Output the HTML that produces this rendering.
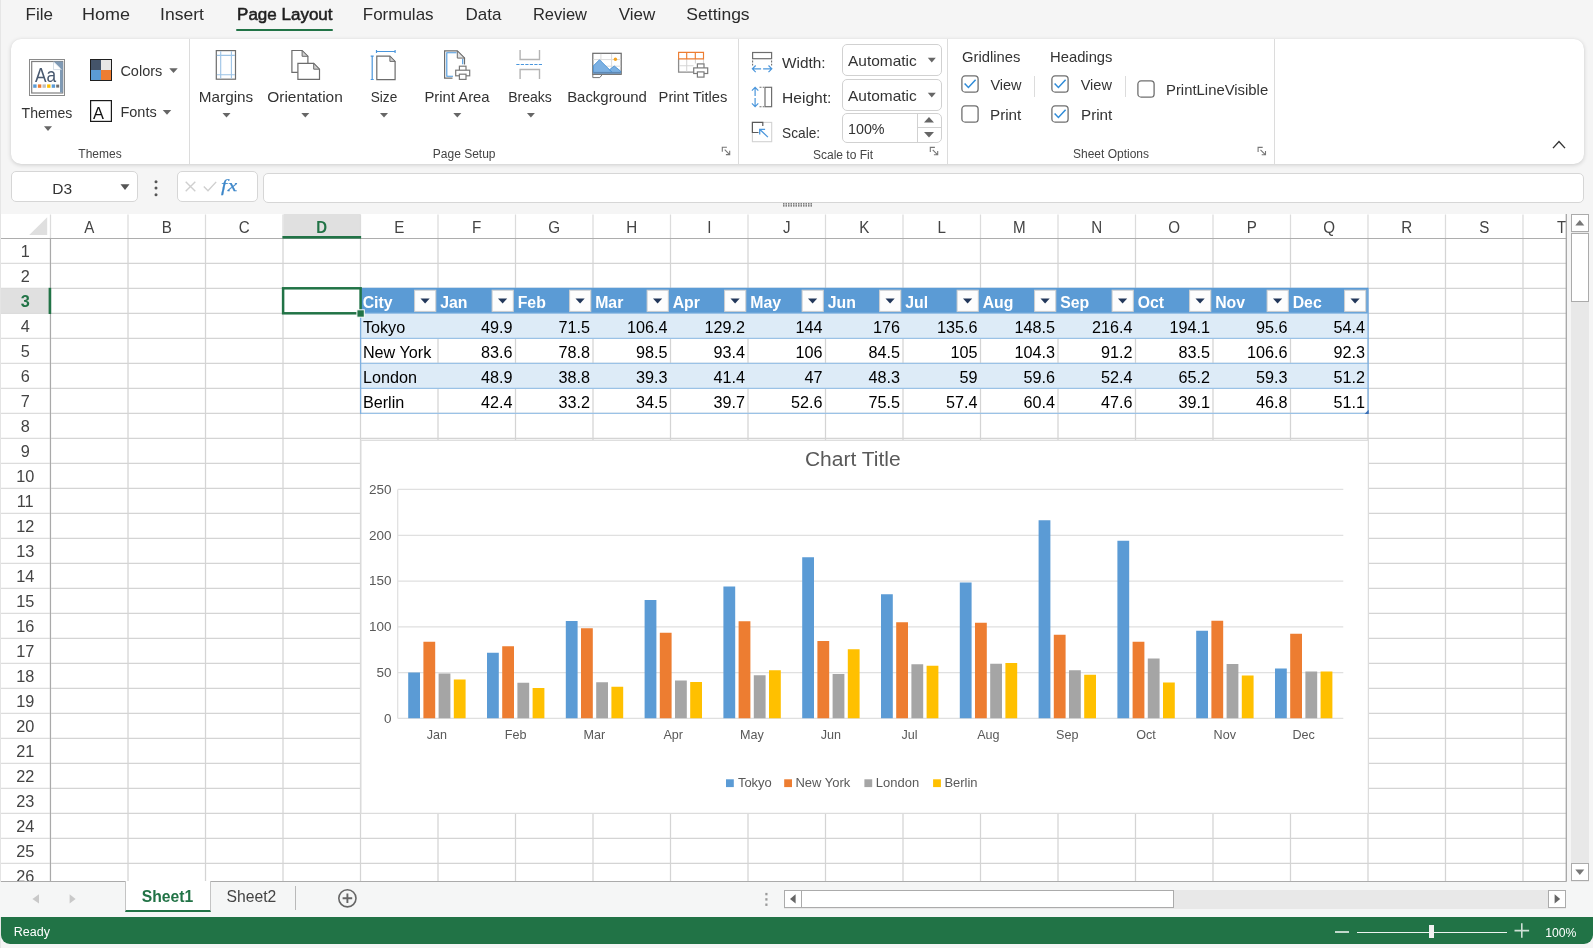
<!DOCTYPE html>
<html lang="en"><head><meta charset="utf-8"><title>Spreadsheet Designer</title>
<style>
html,body{margin:0;padding:0}
body{width:1593px;height:948px;overflow:hidden;background:#f5f5f5;font-family:"Liberation Sans", sans-serif;position:relative}
.t{position:absolute;white-space:nowrap;margin:0;padding:0}
.r{position:absolute;box-sizing:border-box;display:block}
svg text{font-family:"Liberation Sans", sans-serif}
#app{position:absolute;left:0;top:0;width:1593px;height:948px;will-change:transform}
</style></head><body>
<div id="app">
<div class="r" style="left:0px;top:0px;width:1px;height:948px;background:#e6e6e6;"></div><div id="menubar"><div class="t" style="left:-260.80px;width:600px;text-align:center;top:6px;font-size:17px;line-height:17px;color:#2b2b2b;">File</div><div class="t" style="left:-193.80px;width:600px;text-align:center;top:6px;font-size:17px;line-height:17px;color:#2b2b2b;transform:scaleX(1.06);transform-origin:50% 0;">Home</div><div class="t" style="left:-118.00px;width:600px;text-align:center;top:6px;font-size:17px;line-height:17px;color:#2b2b2b;transform:scaleX(1.03);transform-origin:50% 0;">Insert</div><div class="t" style="left:-15.20px;width:600px;text-align:center;top:6px;font-size:17px;line-height:17px;color:#1f1f1f;-webkit-text-stroke:0.55px #1f1f1f;">Page Layout</div><div class="t" style="left:98.20px;width:600px;text-align:center;top:6px;font-size:17px;line-height:17px;color:#2b2b2b;">Formulas</div><div class="t" style="left:183.40px;width:600px;text-align:center;top:6px;font-size:17px;line-height:17px;color:#2b2b2b;">Data</div><div class="t" style="left:259.70px;width:600px;text-align:center;top:6px;font-size:17px;line-height:17px;color:#2b2b2b;transform:scaleX(0.97);transform-origin:50% 0;">Review</div><div class="t" style="left:337.00px;width:600px;text-align:center;top:6px;font-size:17px;line-height:17px;color:#2b2b2b;">View</div><div class="t" style="left:418.00px;width:600px;text-align:center;top:6px;font-size:17px;line-height:17px;color:#2b2b2b;transform:scaleX(1.03);transform-origin:50% 0;">Settings</div><div class="r" style="left:236px;top:28.5px;width:97px;height:2.5px;background:#217346;border-radius:1px;"></div></div><div id="ribbon" class="r" style="left:11px;top:39px;width:1573px;height:124.5px;background:#fff;border-radius:10px;box-shadow:0 1px 4px rgba(0,0,0,.17),0 0 1px rgba(0,0,0,.08)"></div><div class="r" style="left:189px;top:39px;width:1px;height:124.5px;background:#dcdcdc;"></div><div class="r" style="left:738px;top:39px;width:1px;height:124.5px;background:#dcdcdc;"></div><div class="r" style="left:947px;top:39px;width:1px;height:124.5px;background:#dcdcdc;"></div><div class="r" style="left:1274px;top:39px;width:1px;height:124.5px;background:#dcdcdc;"></div><svg class="r" style="left:29px;top:59px" width="36" height="37" viewBox="0 0 36 37" fill="none"><rect x=".5" y=".5" width="35" height="36" fill="#fff" stroke="#8a8a8a"/><rect x="2.7" y="2.5" width="31" height="31.5" fill="#fff" stroke="#7f7f7f" stroke-width="1.2"/><rect x="31" y="3" width="2.8" height="30.5" fill="#7f9ab5"/><polygon points="24.5,2.6 33.6,2.6 33.6,11" fill="#7f9ab5"/><polygon points="24.5,2.8 24.5,10.6 32.6,10.6" fill="#fff" stroke="#b8c6d4" stroke-width=".6"/><text x="5.9" y="22.6" font-size="19.5" fill="#4a5a70" textLength="21.2" lengthAdjust="spacingAndGlyphs">Aa</text><rect x="4.2" y="25.4" width="3.4" height="3.4" fill="#5b9bd5"/><rect x="8.9" y="25.4" width="3.4" height="3.4" fill="#ed7d31"/><rect x="13.5" y="25.4" width="3.4" height="3.4" fill="#bfbfbf"/><rect x="18.1" y="25.4" width="3.4" height="3.4" fill="#ffc000"/><rect x="22.7" y="25.4" width="3.4" height="3.4" fill="#5b9bd5"/><rect x="27.2" y="25.6" width="3" height="3" fill="#6d6d6d"/></svg><div class="t" style="left:-252.70px;width:600px;text-align:center;top:106px;font-size:14.5px;line-height:14.5px;color:#333;transform:scaleX(0.97);transform-origin:50% 0;">Themes</div><svg class="r" style="left:44px;top:126px" width="8" height="5" viewBox="0 0 8 5"><polygon points="0.0,0.3 8.0,0.3 4.0,4.8999999999999995" fill="#666"/></svg><svg class="r" style="left:90px;top:59px" width="22" height="22" viewBox="0 0 22 22" fill="none"><rect x="0" y="0" width="22" height="22" fill="#1f1f1f"/><rect x="1" y="1" width="10" height="10" fill="#44546a"/><rect x="11" y="1" width="10" height="10" fill="#e7e6e6"/><rect x="1" y="11" width="10" height="10" fill="#5b9bd5"/><rect x="11" y="11" width="10" height="10" fill="#ed7d31"/></svg><div class="t" style="left:120.40px;top:64px;font-size:14.5px;line-height:14.5px;color:#333;">Colors</div><svg class="r" style="left:169px;top:68px" width="9" height="6" viewBox="0 0 9 6"><polygon points="0.25,0.3 8.75,0.3 4.5,5.1" fill="#666"/></svg><svg class="r" style="left:90px;top:100px" width="22" height="22" viewBox="0 0 22 22" fill="none"><rect x=".6" y=".6" width="20.8" height="20.8" fill="#fff" stroke="#1a1a1a" stroke-width="1.2"/><text x="8.5" y="18.8" font-size="16.4" fill="#111" text-anchor="middle">A</text></svg><div class="t" style="left:120.40px;top:105px;font-size:14.5px;line-height:14.5px;color:#333;">Fonts</div><svg class="r" style="left:162px;top:110px" width="10" height="5" viewBox="0 0 10 5"><polygon points="0.75,0 9.25,0 5.0,4.8" fill="#666"/></svg><div class="t" style="left:-200.00px;width:600px;text-align:center;top:148px;font-size:12px;line-height:12px;color:#444;">Themes</div><svg class="r" style="left:215px;top:49px" width="23" height="32" viewBox="0 0 23 32" fill="none"><g transform="translate(0.2 0.6)"><rect x="1.1" y="1" width="19.2" height="28.6" fill="#fff" stroke="#6c6c6c" stroke-width="1.2"/><path d="M5.5 1.6V29M16.2 1.6V29M1.7 5.8H19.7M1.7 25.2H19.7" stroke="#9cc3e6" stroke-width="1.1"/></g></svg><div class="t" style="left:-74.00px;width:600px;text-align:center;top:90px;font-size:14.5px;line-height:14.5px;color:#333;transform:scaleX(1.054);transform-origin:50% 0;">Margins</div><svg class="r" style="left:222px;top:113px" width="9" height="5" viewBox="0 0 9 5"><polygon points="0.5,0 8.5,0 4.5,4.6" fill="#666"/></svg><svg class="r" style="left:290px;top:49px" width="31" height="32" viewBox="0 0 31 32" fill="none"><g transform="translate(0.5 0.4)"><path d="M7.4 23H1.4V1.1H11.6L17.4 6.9V13.5" stroke="#6c6c6c" stroke-width="1.2"/><path d="M11.6 1.1V6.9H17.4Z" fill="#d0d0d0" stroke="#6c6c6c" stroke-width="1"/><path d="M7.4 30V14H23.2L29 19.8V30Z" fill="#fff" stroke="#6c6c6c" stroke-width="1.2"/><path d="M23.2 14V19.8H29Z" fill="#d0d0d0" stroke="#6c6c6c" stroke-width="1"/></g></svg><div class="t" style="left:4.80px;width:600px;text-align:center;top:90px;font-size:14.5px;line-height:14.5px;color:#333;transform:scaleX(1.064);transform-origin:50% 0;">Orientation</div><svg class="r" style="left:301px;top:113px" width="9" height="5" viewBox="0 0 9 5"><polygon points="0.3,0 8.3,0 4.3,4.6" fill="#666"/></svg><svg class="r" style="left:370px;top:49px" width="27" height="32" viewBox="0 0 27 32" fill="none"><g transform="translate(0.5 0.5)"><path d="M6 2H24.6M6 .4V3.6M24.6 .4V3.6M1.7 6.6V30M.2 6.6H3.2M.2 30H3.2" stroke="#4a96dc" stroke-width="1.2"/><path d="M6.3 30.1V6.7H19.4L24.6 11.9V30.1Z" fill="#fff" stroke="#6c6c6c" stroke-width="1.2"/><path d="M19.4 6.7V11.9H24.6Z" fill="#d0d0d0" stroke="#6c6c6c" stroke-width="1"/></g></svg><div class="t" style="left:83.50px;width:600px;text-align:center;top:90px;font-size:14.5px;line-height:14.5px;color:#333;transform:scaleX(0.94);transform-origin:50% 0;">Size</div><svg class="r" style="left:380px;top:113px" width="8" height="5" viewBox="0 0 8 5"><polygon points="0.0,0 8.0,0 4.0,4.6" fill="#666"/></svg><svg class="r" style="left:443px;top:49px" width="29" height="32" viewBox="0 0 29 32" fill="none"><g transform="translate(0.5 0.6)"><path d="M9 28.6H1.1V1.3H13.8L21 8.5V15" stroke="#6c6c6c" stroke-width="1.2"/><path d="M13.8 1.3V8.5H21Z" fill="#e4e4e4" stroke="#6c6c6c" stroke-width="1"/><path d="M13 3.1H3.3V26.6H9.5M19.2 9.5V14.6" stroke="#4a96dc" stroke-width="1.1"/><rect x="15.899999999999999" y="16.6" width="6.6" height="5" fill="#fff" stroke="#7a7a7a" stroke-width="1.2"/><rect x="12.2" y="20.6" width="14" height="5.6" fill="#fff" stroke="#7a7a7a" stroke-width="1.2"/><rect x="15.899999999999999" y="24.6" width="6.6" height="5.2" fill="#fff" stroke="#7a7a7a" stroke-width="1.2"/></g></svg><div class="t" style="left:156.80px;width:600px;text-align:center;top:90px;font-size:14.5px;line-height:14.5px;color:#333;transform:scaleX(1.024);transform-origin:50% 0;">Print Area</div><svg class="r" style="left:453px;top:113px" width="9" height="5" viewBox="0 0 9 5"><polygon points="0.3,0 8.3,0 4.3,4.6" fill="#666"/></svg><svg class="r" style="left:515px;top:49px" width="29" height="31" viewBox="0 0 29 31" fill="none"><g transform="translate(0.7 0.5)"><path d="M4.4 .5V10H23.8V.5M4.4 29.5V20H23.8V29.5" stroke="#b4b4b4" stroke-width="1.4"/><path d="M.6 15H27.4" stroke="#4a96dc" stroke-width="1.1" stroke-dasharray="3.2 1.3"/></g></svg><div class="t" style="left:230.40px;width:600px;text-align:center;top:90px;font-size:14.5px;line-height:14.5px;color:#333;transform:scaleX(0.968);transform-origin:50% 0;">Breaks</div><svg class="r" style="left:526px;top:113px" width="9" height="5" viewBox="0 0 9 5"><polygon points="0.9,0 8.9,0 4.9,4.6" fill="#666"/></svg><svg class="r" style="left:591px;top:52px" width="32" height="28" viewBox="0 0 32 28" fill="none"><g transform="translate(0.6 0.4)"><path d="M1.2 21.9V25.2H8.2L10.4 22.4" fill="#fff" stroke="#777" stroke-width="1"/><rect x="1.2" y=".9" width="28.4" height="21" fill="#fff" stroke="#6a6a6a" stroke-width="1.2"/><path d="M9.3 1.5V20.6M20 1.5V20.6M1.8 7.2H29M1.8 13.8H29" stroke="#dcdcdc" stroke-width="1"/><polygon points="1.8,13.4 7.9,7.3 20.8,20.2 1.8,20.2" fill="#7cb0e2" stroke="#3c8ad2" stroke-width=".8"/><polygon points="17.9,17.3 22.7,13.6 29,18.7 29,20.2 20.8,20.2" fill="#7cb0e2" stroke="#3c8ad2" stroke-width=".8"/><rect x="1.8" y="19.5" width="27.2" height="1.9" fill="#5e88b4"/><circle cx="23.8" cy="6.8" r="1.7" fill="#f5a21e"/></g></svg><div class="t" style="left:307.30px;width:600px;text-align:center;top:90px;font-size:14.5px;line-height:14.5px;color:#333;transform:scaleX(1.03);transform-origin:50% 0;">Background</div><svg class="r" style="left:677px;top:51px" width="32" height="28" viewBox="0 0 32 28" fill="none"><g transform="translate(0.5 0.5)"><path d="M1.1 7.4V20.7H16" stroke="#8c8c8c" stroke-width="1.3"/><path d="M9.2 7.4V20M17.9 7.4V12M1.5 14.2H16M26 7.4V12" stroke="#d6d6d6" stroke-width="1.1"/><path d="M1.1 .9H26V7.4H1.1ZM9.2 .9V7.4M17.8 .9V7.4" stroke="#ed7d31" stroke-width="1.15"/><rect x="19.9" y="12.4" width="6.6" height="5" fill="#fff" stroke="#7a7a7a" stroke-width="1.2"/><rect x="16.2" y="16.4" width="14" height="5.6" fill="#fff" stroke="#7a7a7a" stroke-width="1.2"/><rect x="19.9" y="20.4" width="6.6" height="5.2" fill="#fff" stroke="#7a7a7a" stroke-width="1.2"/></g></svg><div class="t" style="left:393.30px;width:600px;text-align:center;top:90px;font-size:14.5px;line-height:14.5px;color:#333;transform:scaleX(1.016);transform-origin:50% 0;">Print Titles</div><div class="t" style="left:164.20px;width:600px;text-align:center;top:148px;font-size:12px;line-height:12px;color:#444;">Page Setup</div><svg class="r" style="left:721px;top:146px" width="10" height="10" viewBox="0 0 10 10" fill="none"><g transform="translate(0.7 0.6)"><path d="M.6 5.2V.6H5.2" stroke="#777" stroke-width="1.1"/><path d="M3 3L8 8M8 4.2V8H4.2" stroke="#777" stroke-width="1.1"/></g></svg><svg class="r" style="left:929px;top:146px" width="10" height="10" viewBox="0 0 10 10" fill="none"><g transform="translate(0.7 0.8)"><path d="M.6 5.2V.6H5.2" stroke="#777" stroke-width="1.1"/><path d="M3 3L8 8M8 4.2V8H4.2" stroke="#777" stroke-width="1.1"/></g></svg><svg class="r" style="left:1257px;top:146px" width="10" height="10" viewBox="0 0 10 10" fill="none"><g transform="translate(0.5 0.8)"><path d="M.6 5.2V.6H5.2" stroke="#777" stroke-width="1.1"/><path d="M3 3L8 8M8 4.2V8H4.2" stroke="#777" stroke-width="1.1"/></g></svg><svg class="r" style="left:751px;top:51px" width="22" height="22" viewBox="0 0 22 22" fill="none"><g transform="translate(0.5 0.5)"><rect x="1.1" y="1" width="19" height="6.2" stroke="#6e6e6e" stroke-width="1.2"/><path d="M1.1 9V14M20.1 9V14" stroke="#6e6e6e" stroke-width="1.1" stroke-dasharray="2 1.2"/><path d="M.9 17.3H9.6M4.2 14L.9 17.3L4.2 20.6M11.6 17.3H20.3M17 14L20.3 17.3L17 20.6" stroke="#4a96dc" stroke-width="1.2"/></g></svg><div class="t" style="left:781.60px;top:56px;font-size:14.5px;line-height:14.5px;color:#333;transform:scaleX(1.06);transform-origin:0 0;">Width:</div><svg class="r" style="left:751px;top:86px" width="22" height="22" viewBox="0 0 22 22" fill="none"><g transform="translate(0.5 0.5)"><rect x="13.5" y=".8" width="6.6" height="19.4" stroke="#6e6e6e" stroke-width="1.2"/><path d="M8 .8H12.6M8 20.2H12.6" stroke="#6e6e6e" stroke-width="1.1" stroke-dasharray="2 1.2"/><path d="M3.6 .9V9.4M.4 4.1L3.6 .9L6.8 4.1M3.6 11.6V20.1M.4 16.9L3.6 20.1L6.8 16.9" stroke="#4a96dc" stroke-width="1.2"/></g></svg><div class="t" style="left:781.60px;top:91px;font-size:14.5px;line-height:14.5px;color:#333;transform:scaleX(1.075);transform-origin:0 0;">Height:</div><svg class="r" style="left:751px;top:121px" width="22" height="22" viewBox="0 0 22 22" fill="none"><g transform="translate(0.5 0.5)"><rect x=".9" y=".9" width="19.3" height="19.3" stroke="#d2d2d2" stroke-width="1.1"/><path d="M7 11H.9V.9H11.3V4.5" stroke="#5a5a5a" stroke-width="1.2"/><path d="M16.4 15.6L8.4 8M8.2 13V7.8H13.6" stroke="#4a96dc" stroke-width="1.3"/></g></svg><div class="t" style="left:781.60px;top:126px;font-size:14.5px;line-height:14.5px;color:#333;transform:scaleX(0.946);transform-origin:0 0;">Scale:</div><div class="r" style="left:842px;top:44px;width:100px;height:31.5px;background:#fff;border:1px solid #d1d1d1;border-radius:5px;"></div><div class="t" style="left:848.00px;top:53px;font-size:15px;line-height:15px;color:#333;transform:scaleX(1.03);transform-origin:0 0;">Automatic</div><svg class="r" style="left:927px;top:57px" width="9" height="6" viewBox="0 0 9 6"><polygon points="0.8,0.8 8.8,0.8 4.8,5.6" fill="#666"/></svg><div class="r" style="left:842px;top:79px;width:100px;height:31.5px;background:#fff;border:1px solid #d1d1d1;border-radius:5px;"></div><div class="t" style="left:848.00px;top:88px;font-size:15px;line-height:15px;color:#333;transform:scaleX(1.03);transform-origin:0 0;">Automatic</div><svg class="r" style="left:927px;top:92px" width="9" height="6" viewBox="0 0 9 6"><polygon points="0.8,0.8 8.8,0.8 4.8,5.6" fill="#666"/></svg><div class="r" style="left:842px;top:113px;width:100px;height:29.5px;background:#fff;border:1px solid #d1d1d1;border-radius:5px;"></div><div class="t" style="left:848.00px;top:122px;font-size:14.3px;line-height:14.3px;color:#333;">100%</div><div class="r" style="left:917px;top:114px;width:1px;height:27.5px;background:#d1d1d1;"></div><div class="r" style="left:917px;top:127px;width:24px;height:1px;background:#d1d1d1;"></div><svg class="r" style="left:924px;top:117.3px" width="10" height="5.4" viewBox="0 0 10 5.4"><polygon points="0,5.4 10,5.4 5,0" fill="#666"/></svg><svg class="r" style="left:924px;top:132.4px" width="10" height="5.6" viewBox="0 0 10 5.6"><polygon points="0,0 10,0 5,5.6" fill="#666"/></svg><div class="t" style="left:543.00px;width:600px;text-align:center;top:149px;font-size:12px;line-height:12px;color:#444;">Scale to Fit</div><div class="t" style="left:961.60px;top:50px;font-size:14.5px;line-height:14.5px;color:#333;transform:scaleX(1.02);transform-origin:0 0;">Gridlines</div><svg class="r" style="left:961px;top:75px" width="18" height="18" viewBox="0 0 18 18" fill="none"><rect x=".9" y=".9" width="16.2" height="16.2" rx="3.2" fill="#fff" stroke="#6f6f6f" stroke-width="1.3"/><path d="M3.6 8.6L7.4 12.5L14.6 4.8" stroke="#2f8bd8" stroke-width="1.5"/></svg><div class="t" style="left:990.40px;top:78px;font-size:14.5px;line-height:14.5px;color:#333;">View</div><svg class="r" style="left:961px;top:105px" width="18" height="18" viewBox="0 0 18 18" fill="none"><rect x=".9" y=".9" width="16.2" height="16.2" rx="3.2" fill="#fff" stroke="#6f6f6f" stroke-width="1.3"/></svg><div class="t" style="left:990.40px;top:108px;font-size:14.5px;line-height:14.5px;color:#333;transform:scaleX(1.05);transform-origin:0 0;">Print</div><div class="r" style="left:1034px;top:76px;width:1px;height:21px;background:#dcdcdc;"></div><div class="t" style="left:1049.60px;top:50px;font-size:14.5px;line-height:14.5px;color:#333;transform:scaleX(1.02);transform-origin:0 0;">Headings</div><svg class="r" style="left:1051px;top:75px" width="18" height="18" viewBox="0 0 18 18" fill="none"><rect x=".9" y=".9" width="16.2" height="16.2" rx="3.2" fill="#fff" stroke="#6f6f6f" stroke-width="1.3"/><path d="M3.6 8.6L7.4 12.5L14.6 4.8" stroke="#2f8bd8" stroke-width="1.5"/></svg><div class="t" style="left:1080.70px;top:78px;font-size:14.5px;line-height:14.5px;color:#333;">View</div><svg class="r" style="left:1051px;top:105px" width="18" height="18" viewBox="0 0 18 18" fill="none"><rect x=".9" y=".9" width="16.2" height="16.2" rx="3.2" fill="#fff" stroke="#6f6f6f" stroke-width="1.3"/><path d="M3.6 8.6L7.4 12.5L14.6 4.8" stroke="#2f8bd8" stroke-width="1.5"/></svg><div class="t" style="left:1080.70px;top:108px;font-size:14.5px;line-height:14.5px;color:#333;transform:scaleX(1.05);transform-origin:0 0;">Print</div><div class="r" style="left:1125px;top:76px;width:1px;height:21px;background:#dcdcdc;"></div><svg class="r" style="left:1137px;top:80px" width="18" height="18" viewBox="0 0 18 18" fill="none"><rect x=".9" y=".9" width="16.2" height="16.2" rx="3.2" fill="#fff" stroke="#6f6f6f" stroke-width="1.3"/></svg><div class="t" style="left:1165.60px;top:83px;font-size:14.5px;line-height:14.5px;color:#333;transform:scaleX(1.025);transform-origin:0 0;">PrintLineVisible</div><div class="t" style="left:811.00px;width:600px;text-align:center;top:148px;font-size:12px;line-height:12px;color:#444;">Sheet Options</div><svg class="r" style="left:1552px;top:139px" width="14" height="11" viewBox="0 0 14 11" fill="none"><g transform="translate(0 0.5)"><path d="M1 8.6L7 2L13 8.6" stroke="#333" stroke-width="1.4"/></g></svg><div class="r" style="left:11px;top:171px;width:126.5px;height:30.5px;background:#fff;border:1px solid #d6d6d6;border-radius:5px;"></div><div class="t" style="left:-237.80px;width:600px;text-align:center;top:181px;font-size:15.5px;line-height:15.5px;color:#333;">D3</div><svg class="r" style="left:120px;top:184px" width="10" height="6" viewBox="0 0 10 6"><polygon points="0.5,0.2 9.5,0.2 5.0,6.0" fill="#555"/></svg><svg class="r" style="left:153px;top:180px" width="6" height="17" viewBox="0 0 6 17" fill="none"><circle cx="3" cy="1.7" r="1.5" fill="#555"/><circle cx="3" cy="8.1" r="1.5" fill="#555"/><circle cx="3" cy="14.7" r="1.5" fill="#555"/></svg><div class="r" style="left:176.5px;top:171px;width:81px;height:30.5px;background:#fff;border:1px solid #d6d6d6;border-radius:5px;"></div><svg class="r" style="left:185px;top:181px" width="11" height="11" viewBox="0 0 11 11" fill="none"><path d="M.7 .7L10.3 10.3M10.3 .7L.7 10.3" stroke="#cfcfcf" stroke-width="1.4"/></svg><svg class="r" style="left:203px;top:181px" width="14" height="11" viewBox="0 0 14 11" fill="none"><path d="M.8 5.6L5 9.8L13.2 .9" stroke="#cfcfcf" stroke-width="1.4"/></svg><div class="t" style="left:221.40px;top:177px;font-size:17.5px;line-height:17.5px;color:#3d87c9;transform:scaleX(1.22);transform-origin:0 0;font-family:'Liberation Serif',serif;-webkit-text-stroke:.25px #3d87c9;letter-spacing:.6px;"><i>fx</i></div><div class="r" style="left:263px;top:173px;width:1321px;height:29.6px;background:#fff;border:1px solid #d6d6d6;border-radius:5px;"></div><svg class="r" style="left:783px;top:203px" width="30" height="4" viewBox="0 0 30 4" fill="none"><path d="M0 .8H30M0 2.9H30" stroke="#5a5a5a" stroke-width="1.2" stroke-dasharray="1.5 1"/></svg><svg id="sheet" class="r" style="left:0;top:214px;overflow:hidden" width="1567" height="668.4" viewBox="0 214 1567 668.4"><rect x="0" y="214" width="1" height="668" fill="#e4e4e4"/><rect x="1" y="214" width="1565.5" height="667.6" fill="#fff"/><path d="M128.00 239V881.6M205.50 239V881.6M283.00 239V881.6M360.50 239V881.6M438.00 239V881.6M515.50 239V881.6M593.00 239V881.6M670.50 239V881.6M748.00 239V881.6M825.50 239V881.6M903.00 239V881.6M980.50 239V881.6M1058.00 239V881.6M1135.50 239V881.6M1213.00 239V881.6M1290.50 239V881.6M1368.00 239V881.6M1445.50 239V881.6M1523.00 239V881.6M51.2 263.40H1566.5M51.2 288.40H1566.5M51.2 313.40H1566.5M51.2 338.40H1566.5M51.2 363.40H1566.5M51.2 388.40H1566.5M51.2 413.40H1566.5M51.2 438.40H1566.5M51.2 463.40H1566.5M51.2 488.40H1566.5M51.2 513.40H1566.5M51.2 538.40H1566.5M51.2 563.40H1566.5M51.2 588.40H1566.5M51.2 613.40H1566.5M51.2 638.40H1566.5M51.2 663.40H1566.5M51.2 688.40H1566.5M51.2 713.40H1566.5M51.2 738.40H1566.5M51.2 763.40H1566.5M51.2 788.40H1566.5M51.2 813.40H1566.5M51.2 838.40H1566.5M51.2 863.40H1566.5" stroke="#d4d4d4" stroke-width="1.25" fill="none"/><rect x="360.60" y="288.40" width="1007.50" height="25" fill="#5b9bd5"/><rect x="360.60" y="313.40" width="1007.50" height="25" fill="#ddebf7"/><rect x="360.60" y="363.40" width="1007.50" height="25" fill="#ddebf7"/><path d="M360.00 313.40H1368.70M360.00 338.40H1368.70M360.00 363.40H1368.70M360.00 388.40H1368.70M360.00 413.40H1368.70" stroke="#9bc2e6" stroke-width="1.4" fill="none"/><path d="M360.60 287.80V414.00M1368.10 287.80V414.00" stroke="#7fb0df" stroke-width="1.3" fill="none"/><path d="M360.60 288.40H1368.10" stroke="#5b9bd5" stroke-width="1.3" fill="none"/><polygon points="1368.70,409.80 1368.70,414.00 1364.50,414.00" fill="#3b6fb5"/><g id="table-header" font-size="17.2" font-weight="700" fill="#fff"><text x="362.70" y="308.4" textLength="29.89" lengthAdjust="spacingAndGlyphs">City</text><text x="440.20" y="308.4" textLength="27.27" lengthAdjust="spacingAndGlyphs">Jan</text><text x="517.70" y="308.4" textLength="28.13" lengthAdjust="spacingAndGlyphs">Feb</text><text x="595.20" y="308.4" textLength="28.14" lengthAdjust="spacingAndGlyphs">Mar</text><text x="672.70" y="308.4" textLength="27.25" lengthAdjust="spacingAndGlyphs">Apr</text><text x="750.20" y="308.4" textLength="30.78" lengthAdjust="spacingAndGlyphs">May</text><text x="827.70" y="308.4" textLength="28.13" lengthAdjust="spacingAndGlyphs">Jun</text><text x="905.20" y="308.4" textLength="22.86" lengthAdjust="spacingAndGlyphs">Jul</text><text x="982.70" y="308.4" textLength="30.76" lengthAdjust="spacingAndGlyphs">Aug</text><text x="1060.20" y="308.4" textLength="29.02" lengthAdjust="spacingAndGlyphs">Sep</text><text x="1137.70" y="308.4" textLength="26.38" lengthAdjust="spacingAndGlyphs">Oct</text><text x="1215.20" y="308.4" textLength="29.89" lengthAdjust="spacingAndGlyphs">Nov</text><text x="1292.70" y="308.4" textLength="29.03" lengthAdjust="spacingAndGlyphs">Dec</text></g><rect x="414.60" y="290.2" width="21.2" height="21.2" fill="#fdfdfd" stroke="#cfcfcf" stroke-width="1"/><polygon points="420.50,298.5 429.70,298.5 425.10,303.5" fill="#22375a"/><rect x="492.10" y="290.2" width="21.2" height="21.2" fill="#fdfdfd" stroke="#cfcfcf" stroke-width="1"/><polygon points="498.00,298.5 507.20,298.5 502.60,303.5" fill="#22375a"/><rect x="569.60" y="290.2" width="21.2" height="21.2" fill="#fdfdfd" stroke="#cfcfcf" stroke-width="1"/><polygon points="575.50,298.5 584.70,298.5 580.10,303.5" fill="#22375a"/><rect x="647.10" y="290.2" width="21.2" height="21.2" fill="#fdfdfd" stroke="#cfcfcf" stroke-width="1"/><polygon points="653.00,298.5 662.20,298.5 657.60,303.5" fill="#22375a"/><rect x="724.60" y="290.2" width="21.2" height="21.2" fill="#fdfdfd" stroke="#cfcfcf" stroke-width="1"/><polygon points="730.50,298.5 739.70,298.5 735.10,303.5" fill="#22375a"/><rect x="802.10" y="290.2" width="21.2" height="21.2" fill="#fdfdfd" stroke="#cfcfcf" stroke-width="1"/><polygon points="808.00,298.5 817.20,298.5 812.60,303.5" fill="#22375a"/><rect x="879.60" y="290.2" width="21.2" height="21.2" fill="#fdfdfd" stroke="#cfcfcf" stroke-width="1"/><polygon points="885.50,298.5 894.70,298.5 890.10,303.5" fill="#22375a"/><rect x="957.10" y="290.2" width="21.2" height="21.2" fill="#fdfdfd" stroke="#cfcfcf" stroke-width="1"/><polygon points="963.00,298.5 972.20,298.5 967.60,303.5" fill="#22375a"/><rect x="1034.60" y="290.2" width="21.2" height="21.2" fill="#fdfdfd" stroke="#cfcfcf" stroke-width="1"/><polygon points="1040.50,298.5 1049.70,298.5 1045.10,303.5" fill="#22375a"/><rect x="1112.10" y="290.2" width="21.2" height="21.2" fill="#fdfdfd" stroke="#cfcfcf" stroke-width="1"/><polygon points="1118.00,298.5 1127.20,298.5 1122.60,303.5" fill="#22375a"/><rect x="1189.60" y="290.2" width="21.2" height="21.2" fill="#fdfdfd" stroke="#cfcfcf" stroke-width="1"/><polygon points="1195.50,298.5 1204.70,298.5 1200.10,303.5" fill="#22375a"/><rect x="1267.10" y="290.2" width="21.2" height="21.2" fill="#fdfdfd" stroke="#cfcfcf" stroke-width="1"/><polygon points="1273.00,298.5 1282.20,298.5 1277.60,303.5" fill="#22375a"/><rect x="1344.60" y="290.2" width="21.2" height="21.2" fill="#fdfdfd" stroke="#cfcfcf" stroke-width="1"/><polygon points="1350.50,298.5 1359.70,298.5 1355.10,303.5" fill="#22375a"/><g id="table-body" font-size="16.2" fill="#000"><text x="362.90" y="333">Tokyo</text><text x="512.50" y="333" text-anchor="end">49.9</text><text x="590.00" y="333" text-anchor="end">71.5</text><text x="667.50" y="333" text-anchor="end">106.4</text><text x="745.00" y="333" text-anchor="end">129.2</text><text x="822.50" y="333" text-anchor="end">144</text><text x="900.00" y="333" text-anchor="end">176</text><text x="977.50" y="333" text-anchor="end">135.6</text><text x="1055.00" y="333" text-anchor="end">148.5</text><text x="1132.50" y="333" text-anchor="end">216.4</text><text x="1210.00" y="333" text-anchor="end">194.1</text><text x="1287.50" y="333" text-anchor="end">95.6</text><text x="1365.00" y="333" text-anchor="end">54.4</text><text x="362.90" y="358">New York</text><text x="512.50" y="358" text-anchor="end">83.6</text><text x="590.00" y="358" text-anchor="end">78.8</text><text x="667.50" y="358" text-anchor="end">98.5</text><text x="745.00" y="358" text-anchor="end">93.4</text><text x="822.50" y="358" text-anchor="end">106</text><text x="900.00" y="358" text-anchor="end">84.5</text><text x="977.50" y="358" text-anchor="end">105</text><text x="1055.00" y="358" text-anchor="end">104.3</text><text x="1132.50" y="358" text-anchor="end">91.2</text><text x="1210.00" y="358" text-anchor="end">83.5</text><text x="1287.50" y="358" text-anchor="end">106.6</text><text x="1365.00" y="358" text-anchor="end">92.3</text><text x="362.90" y="383">London</text><text x="512.50" y="383" text-anchor="end">48.9</text><text x="590.00" y="383" text-anchor="end">38.8</text><text x="667.50" y="383" text-anchor="end">39.3</text><text x="745.00" y="383" text-anchor="end">41.4</text><text x="822.50" y="383" text-anchor="end">47</text><text x="900.00" y="383" text-anchor="end">48.3</text><text x="977.50" y="383" text-anchor="end">59</text><text x="1055.00" y="383" text-anchor="end">59.6</text><text x="1132.50" y="383" text-anchor="end">52.4</text><text x="1210.00" y="383" text-anchor="end">65.2</text><text x="1287.50" y="383" text-anchor="end">59.3</text><text x="1365.00" y="383" text-anchor="end">51.2</text><text x="362.90" y="408">Berlin</text><text x="512.50" y="408" text-anchor="end">42.4</text><text x="590.00" y="408" text-anchor="end">33.2</text><text x="667.50" y="408" text-anchor="end">34.5</text><text x="745.00" y="408" text-anchor="end">39.7</text><text x="822.50" y="408" text-anchor="end">52.6</text><text x="900.00" y="408" text-anchor="end">75.5</text><text x="977.50" y="408" text-anchor="end">57.4</text><text x="1055.00" y="408" text-anchor="end">60.4</text><text x="1132.50" y="408" text-anchor="end">47.6</text><text x="1210.00" y="408" text-anchor="end">39.1</text><text x="1287.50" y="408" text-anchor="end">46.8</text><text x="1365.00" y="408" text-anchor="end">51.1</text></g><g id="chart"><rect x="360.9" y="440.3" width="1007.50" height="373.10" fill="#fff" stroke="#dcdcdc" stroke-width="1.25"/><path d="M397.7 718.30H1343.3M397.7 672.54H1343.3M397.7 626.78H1343.3M397.7 581.02H1343.3M397.7 535.26H1343.3M397.7 489.50H1343.3M397.7 489.50V718.3" stroke="#e0e0e0" stroke-width="1.25" fill="none"/><text x="852.8" y="465.6" font-size="21" fill="#595959" text-anchor="middle">Chart Title</text><g font-size="13.5" fill="#595959" text-anchor="end"><text x="391.6" y="722.70">0</text><text x="391.6" y="676.94">50</text><text x="391.6" y="631.18">100</text><text x="391.6" y="585.42">150</text><text x="391.6" y="539.66">200</text><text x="391.6" y="493.90">250</text></g><path d="M408.20 718.3v-45.67h11.8v45.67zM487.00 718.3v-65.44h11.8v65.44zM565.80 718.3v-97.38h11.8v97.38zM644.60 718.3v-118.24h11.8v118.24zM723.40 718.3v-131.79h11.8v131.79zM802.20 718.3v-161.08h11.8v161.08zM881.00 718.3v-124.10h11.8v124.10zM959.80 718.3v-135.91h11.8v135.91zM1038.60 718.3v-198.05h11.8v198.05zM1117.40 718.3v-177.64h11.8v177.64zM1196.20 718.3v-87.49h11.8v87.49zM1275.00 718.3v-49.79h11.8v49.79z" fill="#5b9bd5"/><path d="M423.40 718.3v-76.51h11.8v76.51zM502.20 718.3v-72.12h11.8v72.12zM581.00 718.3v-90.15h11.8v90.15zM659.80 718.3v-85.48h11.8v85.48zM738.60 718.3v-97.01h11.8v97.01zM817.40 718.3v-77.33h11.8v77.33zM896.20 718.3v-96.10h11.8v96.10zM975.00 718.3v-95.46h11.8v95.46zM1053.80 718.3v-83.47h11.8v83.47zM1132.60 718.3v-76.42h11.8v76.42zM1211.40 718.3v-97.56h11.8v97.56zM1290.20 718.3v-84.47h11.8v84.47z" fill="#ed7d31"/><path d="M438.60 718.3v-44.75h11.8v44.75zM517.40 718.3v-35.51h11.8v35.51zM596.20 718.3v-35.97h11.8v35.97zM675.00 718.3v-37.89h11.8v37.89zM753.80 718.3v-43.01h11.8v43.01zM832.60 718.3v-44.20h11.8v44.20zM911.40 718.3v-54.00h11.8v54.00zM990.20 718.3v-54.55h11.8v54.55zM1069.00 718.3v-47.96h11.8v47.96zM1147.80 718.3v-59.67h11.8v59.67zM1226.60 718.3v-54.27h11.8v54.27zM1305.40 718.3v-46.86h11.8v46.86z" fill="#a5a5a5"/><path d="M453.80 718.3v-38.80h11.8v38.80zM532.60 718.3v-30.38h11.8v30.38zM611.40 718.3v-31.57h11.8v31.57zM690.20 718.3v-36.33h11.8v36.33zM769.00 718.3v-48.14h11.8v48.14zM847.80 718.3v-69.10h11.8v69.10zM926.60 718.3v-52.53h11.8v52.53zM1005.40 718.3v-55.28h11.8v55.28zM1084.20 718.3v-43.56h11.8v43.56zM1163.00 718.3v-35.78h11.8v35.78zM1241.80 718.3v-42.83h11.8v42.83zM1320.60 718.3v-46.77h11.8v46.77z" fill="#ffc000"/><g font-size="12.6" fill="#595959" text-anchor="middle"><text x="436.80" y="738.8">Jan</text><text x="515.60" y="738.8">Feb</text><text x="594.40" y="738.8">Mar</text><text x="673.20" y="738.8">Apr</text><text x="752.00" y="738.8">May</text><text x="830.80" y="738.8">Jun</text><text x="909.60" y="738.8">Jul</text><text x="988.40" y="738.8">Aug</text><text x="1067.20" y="738.8">Sep</text><text x="1146.00" y="738.8">Oct</text><text x="1224.80" y="738.8">Nov</text><text x="1303.60" y="738.8">Dec</text></g><g font-size="13" fill="#595959"><rect x="726" y="779.3" width="7.8" height="7.8" fill="#5b9bd5"/><text x="737.9" y="787">Tokyo</text><rect x="784.2" y="779.3" width="7.8" height="7.8" fill="#ed7d31"/><text x="795.5" y="787">New York</text><rect x="864.4" y="779.3" width="7.8" height="7.8" fill="#a5a5a5"/><text x="875.8" y="787">London</text><rect x="933.1" y="779.3" width="7.8" height="7.8" fill="#ffc000"/><text x="944.4" y="787">Berlin</text></g></g><rect x="1" y="214" width="1565.5" height="24.4" fill="#fff"/><rect x="1" y="238.4" width="49.4" height="643.2" fill="#fff"/><rect x="283.60" y="214" width="76.90" height="24" fill="#e0e0e0"/><rect x="1" y="289.00" width="48.8" height="24.4" fill="#e0e0e0"/><path d="M50.50 214.5V238M128.00 214.5V238M205.50 214.5V238M283.00 214.5V238M360.50 214.5V238M438.00 214.5V238M515.50 214.5V238M593.00 214.5V238M670.50 214.5V238M748.00 214.5V238M825.50 214.5V238M903.00 214.5V238M980.50 214.5V238M1058.00 214.5V238M1135.50 214.5V238M1213.00 214.5V238M1290.50 214.5V238M1368.00 214.5V238M1445.50 214.5V238M1523.00 214.5V238M1 263.40H49.8M1 288.40H49.8M1 313.40H49.8M1 338.40H49.8M1 363.40H49.8M1 388.40H49.8M1 413.40H49.8M1 438.40H49.8M1 463.40H49.8M1 488.40H49.8M1 513.40H49.8M1 538.40H49.8M1 563.40H49.8M1 588.40H49.8M1 613.40H49.8M1 638.40H49.8M1 663.40H49.8M1 688.40H49.8M1 713.40H49.8M1 738.40H49.8M1 763.40H49.8M1 788.40H49.8M1 813.40H49.8M1 838.40H49.8M1 863.40H49.8" stroke="#dcdcdc" stroke-width="1.25" fill="none"/><path d="M1 238.5H1566.5" stroke="#adadad" stroke-width="1.15" fill="none"/><path d="M50.45 238.4V881.6" stroke="#a9a9a9" stroke-width="1.25" fill="none"/><rect x="282.40" y="236" width="78.70" height="2.6" fill="#217346"/><rect x="48.6" y="287.80" width="2.6" height="26.2" fill="#217346"/><polygon points="47.2,217.2 47.2,235 29.2,235" fill="#dfdfdf"/><g id="col-headers" font-size="16.3" fill="#444" text-anchor="middle"><text x="89.25" y="232.8" textLength="10.11" lengthAdjust="spacingAndGlyphs">A</text><text x="166.75" y="232.8" textLength="10.11" lengthAdjust="spacingAndGlyphs">B</text><text x="244.25" y="232.8" textLength="10.95" lengthAdjust="spacingAndGlyphs">C</text><text x="321.75" y="232.8" fill="#217346" font-weight="700" textLength="10.83" lengthAdjust="spacingAndGlyphs">D</text><text x="399.25" y="232.8" textLength="10.11" lengthAdjust="spacingAndGlyphs">E</text><text x="476.75" y="232.8" textLength="9.26" lengthAdjust="spacingAndGlyphs">F</text><text x="554.25" y="232.8" textLength="11.79" lengthAdjust="spacingAndGlyphs">G</text><text x="631.75" y="232.8" textLength="10.95" lengthAdjust="spacingAndGlyphs">H</text><text x="709.25" y="232.8" textLength="4.21" lengthAdjust="spacingAndGlyphs">I</text><text x="786.75" y="232.8" textLength="7.58" lengthAdjust="spacingAndGlyphs">J</text><text x="864.25" y="232.8" textLength="10.11" lengthAdjust="spacingAndGlyphs">K</text><text x="941.75" y="232.8" textLength="8.43" lengthAdjust="spacingAndGlyphs">L</text><text x="1019.25" y="232.8" textLength="12.63" lengthAdjust="spacingAndGlyphs">M</text><text x="1096.75" y="232.8" textLength="10.95" lengthAdjust="spacingAndGlyphs">N</text><text x="1174.25" y="232.8" textLength="11.79" lengthAdjust="spacingAndGlyphs">O</text><text x="1251.75" y="232.8" textLength="10.11" lengthAdjust="spacingAndGlyphs">P</text><text x="1329.25" y="232.8" textLength="11.79" lengthAdjust="spacingAndGlyphs">Q</text><text x="1406.75" y="232.8" textLength="10.95" lengthAdjust="spacingAndGlyphs">R</text><text x="1484.25" y="232.8" textLength="10.11" lengthAdjust="spacingAndGlyphs">S</text><text x="1561.75" y="232.8" textLength="9.26" lengthAdjust="spacingAndGlyphs">T</text></g><g id="row-headers" font-size="16.3" fill="#444" text-anchor="middle"><text x="25.2" y="256.9">1</text><text x="25.2" y="281.9">2</text><text x="25.2" y="306.9" fill="#217346" font-weight="700">3</text><text x="25.2" y="331.9">4</text><text x="25.2" y="356.9">5</text><text x="25.2" y="381.9">6</text><text x="25.2" y="406.9">7</text><text x="25.2" y="431.9">8</text><text x="25.2" y="456.9">9</text><text x="25.2" y="481.9">10</text><text x="25.2" y="506.9">11</text><text x="25.2" y="531.9">12</text><text x="25.2" y="556.9">13</text><text x="25.2" y="581.9">14</text><text x="25.2" y="606.9">15</text><text x="25.2" y="631.9">16</text><text x="25.2" y="656.9">17</text><text x="25.2" y="681.9">18</text><text x="25.2" y="706.9">19</text><text x="25.2" y="731.9">20</text><text x="25.2" y="756.9">21</text><text x="25.2" y="781.9">22</text><text x="25.2" y="806.9">23</text><text x="25.2" y="831.9">24</text><text x="25.2" y="856.9">25</text><text x="25.2" y="881.9">26</text></g><rect x="283.10" y="288.30" width="77.50" height="25" fill="none" stroke="#217346" stroke-width="2.5"/><rect x="356.90" y="309.80" width="7.4" height="7.4" fill="#217346" stroke="#fff" stroke-width="1"/><path d="M1 881.6H1566.5" stroke="#ababab" stroke-width="1.3" fill="none"/><path d="M1566.3 214V881.6" stroke="#a4a4a4" stroke-width="1.3" fill="none"/></svg><div class="r" style="left:1571px;top:214px;width:17.5px;height:667.5px;background:#e8e8e8;"></div><div class="r" style="left:1571px;top:214.3px;width:17.5px;height:17.4px;background:#fff;border:1px solid #ababab;"></div><svg class="r" style="left:1575px;top:220px" width="10" height="6" viewBox="0 0 10 6" fill="none"><g transform="translate(0.3 0)"><polygon points="0,5.4 9,5.4 4.5,0" fill="#777"/></g></svg><div class="r" style="left:1571px;top:233.4px;width:17.5px;height:68.4px;background:#fff;border:1px solid #ababab;"></div><div class="r" style="left:1571px;top:863.2px;width:17.5px;height:17.4px;background:#fff;border:1px solid #ababab;"></div><svg class="r" style="left:1575px;top:869px" width="10" height="6" viewBox="0 0 10 6" fill="none"><g transform="translate(0.3 0.6)"><polygon points="0,0 9,0 4.5,5.4" fill="#777"/></g></svg><div class="r" style="left:0px;top:882.2px;width:1593px;height:35px;background:#f5f6f6;"></div><svg class="r" style="left:32px;top:894px" width="8" height="10" viewBox="0 0 8 10" fill="none"><g transform="translate(0.4 0.2)"><polygon points="6.6,0 6.6,9.4 0,4.7" fill="#c9c9c9"/></g></svg><svg class="r" style="left:69px;top:894px" width="8" height="10" viewBox="0 0 8 10" fill="none"><g transform="translate(0.6 0.2)"><polygon points="0,0 0,9.4 6,4.7" fill="#c9c9c9"/></g></svg><div class="r" style="left:125.4px;top:880.8px;width:86px;height:31.4px;background:#fff;border-left:1px solid #c4c4c4;border-right:1px solid #c4c4c4;border-bottom:2.6px solid #217346;"></div><div class="t" style="left:-132.60px;width:600px;text-align:center;top:889px;font-size:15.7px;line-height:15.7px;color:#217346;font-weight:700;">Sheet1</div><div class="t" style="left:-48.60px;width:600px;text-align:center;top:889px;font-size:15.7px;line-height:15.7px;color:#444;">Sheet2</div><div class="r" style="left:295.3px;top:886px;width:1px;height:24.4px;background:#b9b9b9;"></div><svg class="r" style="left:337px;top:888px" width="21" height="21" viewBox="0 0 21 21" fill="none"><circle cx="10.4" cy="10.3" r="8.6" stroke="#666" stroke-width="1.6"/><path d="M5.6 10.3H15.2M10.4 5.5V15.1" stroke="#666" stroke-width="1.9"/></svg><svg class="r" style="left:765px;top:892px" width="3" height="15" viewBox="0 0 3 15" fill="none"><g transform="translate(0 0.6)"><rect x=".3" y=".3" width="2.2" height="2.4" fill="#9a9a9a"/><rect x=".3" y="5.6" width="2.2" height="2.4" fill="#9a9a9a"/><rect x=".3" y="10.9" width="2.2" height="2.4" fill="#9a9a9a"/></g></svg><div class="r" style="left:784px;top:890px;width:782px;height:18.6px;background:#e8e8e8;"></div><div class="r" style="left:784px;top:890px;width:18px;height:17.8px;background:#fff;border:1px solid #ababab;"></div><svg class="r" style="left:790px;top:894px" width="6" height="10" viewBox="0 0 6 10" fill="none"><g transform="translate(0 0.2)"><polygon points="5.6,0 5.6,9.4 0,4.7" fill="#666"/></g></svg><div class="r" style="left:801.4px;top:890px;width:372.8px;height:17.8px;background:#fff;border:1px solid #ababab;"></div><div class="r" style="left:1548px;top:890px;width:17.8px;height:17.8px;background:#fff;border:1px solid #ababab;"></div><svg class="r" style="left:1554px;top:894px" width="7" height="10" viewBox="0 0 7 10" fill="none"><g transform="translate(0.6 0.2)"><polygon points="0,0 0,9.4 5.6,4.7" fill="#666"/></g></svg><div class="r" style="left:1px;top:917px;width:1591.5px;height:27.2px;background:#217346;border-radius:0 0 9px 9px;"></div><div class="t" style="left:13.80px;top:926px;font-size:12.5px;line-height:12.5px;color:#fff;">Ready</div><div class="r" style="left:1335px;top:931px;width:14.3px;height:1.8px;background:rgba(255,255,255,.72);"></div><div class="r" style="left:1357px;top:931.6px;width:150px;height:1.1px;background:rgba(255,255,255,.92);"></div><div class="r" style="left:1429px;top:924.8px;width:5px;height:13px;background:#f1f1f1;"></div><svg class="r" style="left:1514px;top:923px" width="16" height="16" viewBox="0 0 16 16" fill="none"><g transform="translate(0.5 0.2)"><path d="M0 7.4H14.6M7.3 0V14.6" stroke="rgba(255,255,255,.78)" stroke-width="1.6"/></g></svg><div class="t" style="left:1545.20px;top:927px;font-size:12.2px;line-height:12.2px;color:#fff;">100%</div>
</div>
</body></html>
